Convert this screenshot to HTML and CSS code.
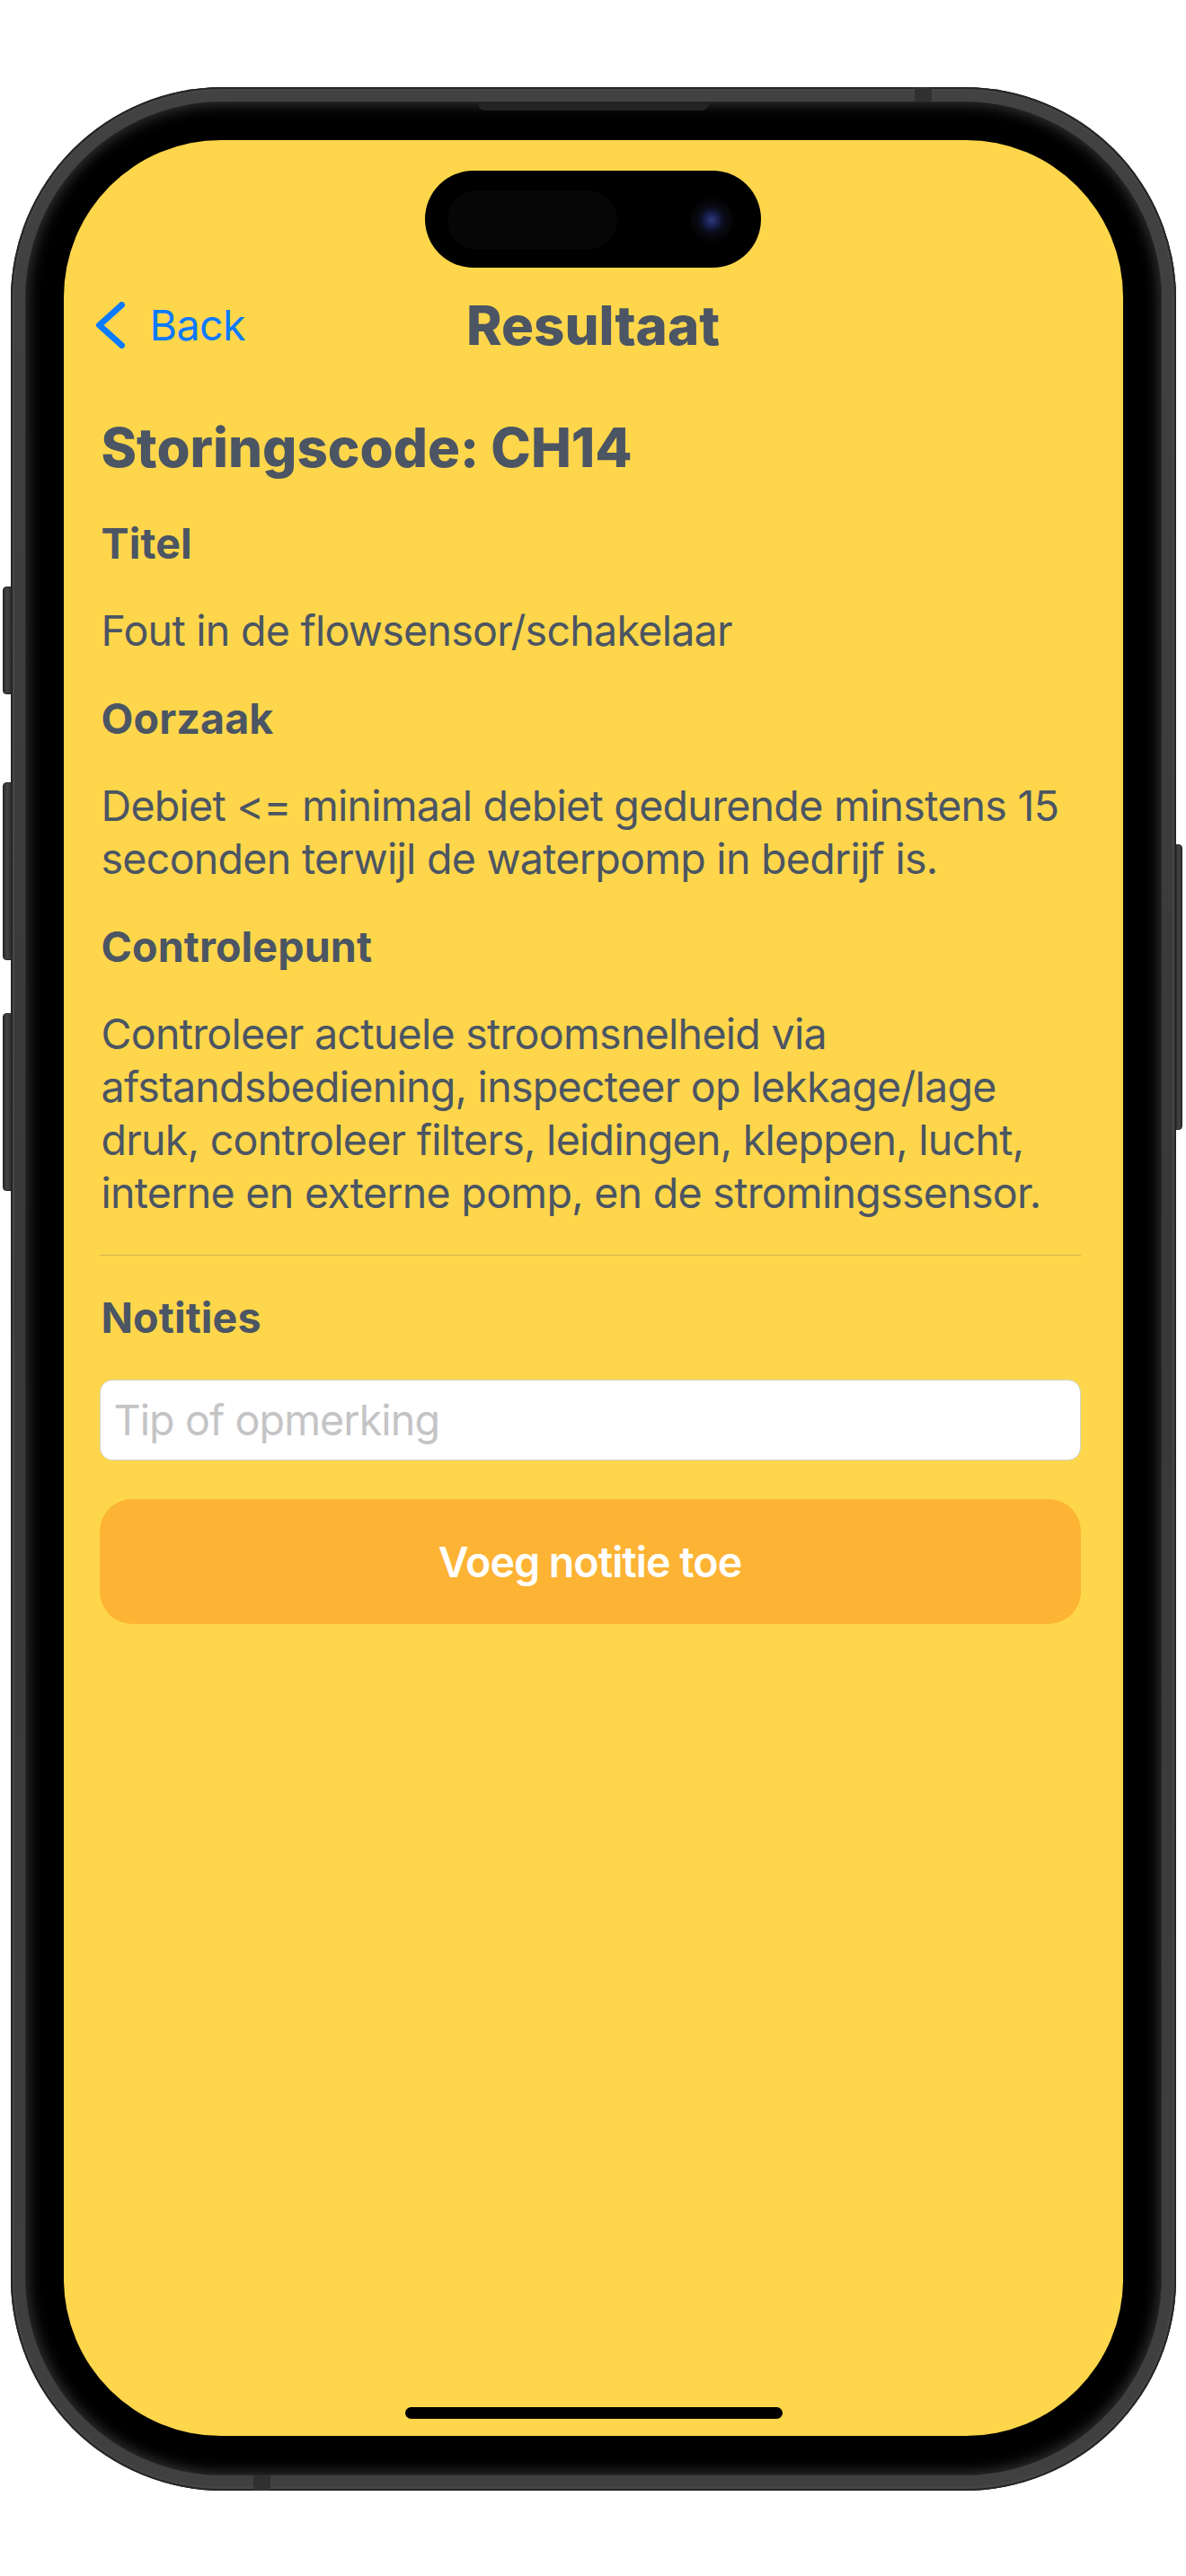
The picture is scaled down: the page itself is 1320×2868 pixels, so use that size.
FILE: index.html
```html
<!DOCTYPE html>
<html lang="nl">
<head>
<meta charset="utf-8">
<title>Resultaat</title>
<link rel="stylesheet" href="styles.css">
</head>
<body>
<div class="device">
  <span class="side-btn side-action"></span>
  <span class="side-btn side-vol-up"></span>
  <span class="side-btn side-vol-down"></span>
  <span class="side-btn side-power"></span>
  <span class="antenna antenna-top"></span>
  <span class="antenna antenna-bottom"></span>
  <div class="bezel">
    <span class="speaker"></span>
    <div class="screen">
      <div class="island"><span class="island-sensor"></span><span class="island-lens"></span></div>
      <header class="nav">
        <a class="nav-back">
          <svg class="chevron" width="32" height="52" viewBox="0 0 32 52"><path d="M28.5 3.5 L3.5 26 L28.5 48.5" fill="none" stroke="#0a7aff" stroke-width="7" stroke-linecap="round" stroke-linejoin="round"/></svg>
          <span class="back-label">Back</span>
        </a>
        <h1 class="nav-title">Resultaat</h1>
        <span class="nav-spacer"></span>
      </header>
      <main class="content">
        <h2 class="code">Storingscode: CH14</h2>
        <h3 class="label">Titel</h3>
        <p class="body-text">Fout in de flowsensor/schakelaar</p>
        <h3 class="label">Oorzaak</h3>
        <p class="body-text">Debiet &lt;= minimaal debiet gedurende minstens 15 seconden terwijl de waterpomp in bedrijf is.</p>
        <h3 class="label">Controlepunt</h3>
        <p class="body-text">Controleer actuele stroomsnelheid via afstandsbediening, inspecteer op lekkage/lage druk, controleer filters, leidingen, kleppen, lucht, interne en externe pomp, en de stromingssensor.</p>
        <hr class="divider">
        <h3 class="label label-notes">Notities</h3>
        <input class="note-input" type="text" placeholder="Tip of opmerking">
        <button class="note-button" type="button">Voeg notitie toe</button>
      </main>
      <span class="home-indicator"></span>
    </div>
  </div>
</div>
</body>
</html>
```

FILE: styles.css
```css
* { box-sizing: border-box; }

html, body {
  margin: 0;
  padding: 0;
  background: #ffffff;
}

body {
  font-family: "Inter", "Liberation Sans", sans-serif;
  width: 1320px;
  height: 2868px;
  overflow: hidden;
}

/* ---------- device frame ---------- */
.device {
  position: relative;
  width: 1297px;
  height: 2676px;
  margin: 97px auto 0;
  padding: 17px 17px 18px;
  border-radius: 236px;
  background: linear-gradient(180deg, #424242 0%, #383838 50%, #404040 100%);
  box-shadow: inset 0 0 0 2px #262626, inset 0 0 0 4px #474747;
}

.bezel {
  position: relative;
  height: 100%;
  padding: 42px 42px 43px;
  border-radius: 219px;
  background: #000;
  box-shadow: 0 0 0 1px #282828, inset 0 0 16px 2px rgba(64, 64, 64, 0.85);
}

.speaker {
  position: absolute;
  top: 1px;
  left: 50%;
  width: 257px;
  height: 8px;
  margin-left: -128.5px;
  border-radius: 0 0 8px 8px;
  background: #242424;
}

.side-btn {
  position: absolute;
  background: linear-gradient(90deg, #2c2c2c, #454545 50%, #2e2e2e);
  border: 1px solid #262626;
}

.side-action, .side-vol-up, .side-vol-down {
  left: -9px;
  width: 10px;
  border-radius: 4px 0 0 4px;
}
.side-action { top: 556px; height: 120px; }
.side-vol-up { top: 774px; height: 198px; }
.side-vol-down { top: 1031px; height: 198px; }

.side-power {
  right: -7px;
  top: 843px;
  width: 8px;
  height: 318px;
  border-radius: 0 4px 4px 0;
}

.antenna {
  position: absolute;
  width: 19px;
  background: #303030;
}
.antenna-top { top: 0; left: 1006px; height: 17px; }
.antenna-bottom { bottom: 0; left: 270px; height: 18px; }

/* ---------- screen ---------- */
.screen {
  position: relative;
  height: 2556px;
  border-radius: 175px;
  overflow: hidden;
  background: #fed64b;
  padding-top: 162px;
  color: #4b5563;
}

.island {
  position: absolute;
  top: 34px;
  left: 50%;
  width: 374px;
  height: 108px;
  margin-left: -187px;
  border-radius: 54px;
  background: #000;
}

.island-sensor {
  position: absolute;
  left: 25px;
  top: 22px;
  width: 189px;
  height: 66px;
  border-radius: 33px;
  background: #060606;
}

.island-lens {
  position: absolute;
  left: 295px;
  top: 31px;
  width: 48px;
  height: 48px;
  border-radius: 50%;
  background: radial-gradient(circle at 50% 50%, #2f3a7a 0, #1a2050 7px, #0d1026 12px, #08080f 17px, #040406 24px);
}

.home-indicator {
  position: absolute;
  left: 380px;
  top: 2524px;
  width: 420px;
  height: 13px;
  border-radius: 7px;
  background: #000;
}

/* ---------- nav ---------- */
.nav {
  display: grid;
  grid-template-columns: 1fr auto 1fr;
  align-items: center;
  height: 88px;
  padding: 0 36px;
}

.nav-back {
  display: flex;
  align-items: center;
  gap: 28px;
  color: #0a7aff;
  font-size: 46.6px;
  letter-spacing: -0.6px;
  line-height: 1;
}

.chevron { display: block; flex: none; }

.back-label { display: block; }

.nav-title {
  margin: 0;
  font-size: 60px;
  font-weight: 800;
  letter-spacing: 0;
  line-height: 1;
  color: #4b5563;
}

/* ---------- content ---------- */
.content {
  display: flex;
  flex-direction: column;
  gap: 38.5px;
  padding: 53px 47px 0 40px;
}

.code {
  margin: 0;
  padding-left: 2px;
  font-size: 60px;
  font-weight: 800;
  line-height: 78px;
  letter-spacing: 0;
}

.label {
  margin: 0;
  padding-left: 2px;
  font-size: 46.6px;
  font-weight: 700;
  line-height: 59px;
  letter-spacing: 0.1px;
}

.label-notes { margin-top: 2px; }

.body-text {
  margin: 0;
  padding-left: 2px;
  font-size: 46.6px;
  font-weight: 400;
  line-height: 59px;
  letter-spacing: -0.75px;
}

.divider {
  margin: 0;
  height: 1px;
  border: 0;
  background: rgba(80, 80, 80, 0.25);
}

.note-input {
  display: block;
  width: 100%;
  height: 90px;
  margin: 0;
  padding: 0 15px;
  border: 1.5px solid #d2d2d2;
  border-radius: 14px;
  background: #fff;
  font-family: inherit;
  font-size: 46.6px;
  letter-spacing: -0.9px;
  color: #1c1c1e;
  outline: none;
}

.note-input::placeholder {
  color: #c4c4c6;
}

.note-button {
  display: block;
  width: 100%;
  height: 139px;
  margin: 5px 0 0;
  padding: 0;
  border: 0;
  border-radius: 36px;
  background: #fdb334;
  color: #ffffff;
  font-family: inherit;
  font-size: 46.6px;
  font-weight: 600;
  letter-spacing: -1px;
}
```
